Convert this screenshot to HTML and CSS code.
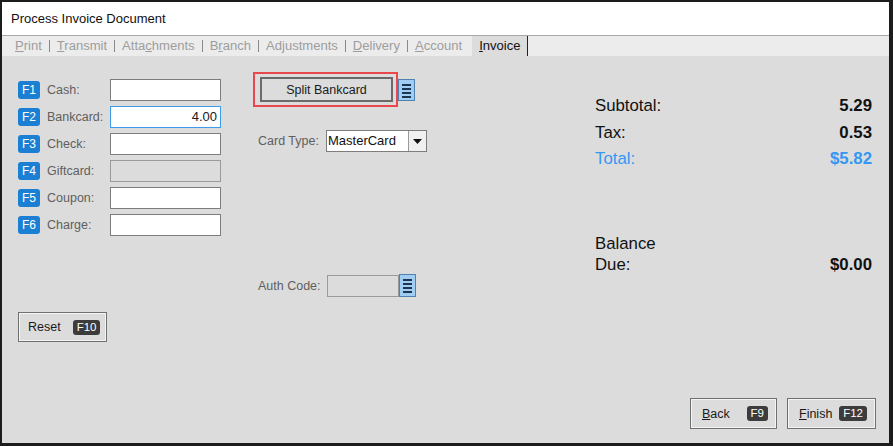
FILE: index.html
```html
<!DOCTYPE html>
<html>
<head>
<meta charset="utf-8">
<title>Process Invoice Document</title>
<link rel="stylesheet" href="styles.css">
</head>
<body>
<div class="window">
  <div class="titlebar">Process Invoice Document</div>
  <div class="tabs">
    <span class="tab"><u>P</u>rint</span><span class="sep"></span>
    <span class="tab"><u>T</u>ransmit</span><span class="sep"></span>
    <span class="tab">Atta<u>c</u>hments</span><span class="sep"></span>
    <span class="tab">B<u>r</u>anch</span><span class="sep"></span>
    <span class="tab">Ad<u>j</u>ustments</span><span class="sep"></span>
    <span class="tab"><u>D</u>elivery</span><span class="sep"></span>
    <span class="tab"><u>A</u>ccount</span>
    <span class="tab active"><u>I</u>nvoice</span>
  </div>
  <div class="main">
    <div class="columns">
      <div class="col-left">
        <div class="pay-list">
          <div class="pay-row"><span class="fkey">F1</span><span class="lbl">Cash:</span><span class="inp"></span></div>
          <div class="pay-row"><span class="fkey">F2</span><span class="lbl">Bankcard:</span><span class="inp focus">4.00</span></div>
          <div class="pay-row"><span class="fkey">F3</span><span class="lbl">Check:</span><span class="inp"></span></div>
          <div class="pay-row"><span class="fkey">F4</span><span class="lbl">Giftcard:</span><span class="inp disabled"></span></div>
          <div class="pay-row"><span class="fkey">F5</span><span class="lbl">Coupon:</span><span class="inp"></span></div>
          <div class="pay-row"><span class="fkey">F6</span><span class="lbl">Charge:</span><span class="inp"></span></div>
        </div>
        <div class="btn reset">Reset <span class="dkey">F10</span></div>
      </div>
      <div class="col-mid">
        <div class="split-row">
          <div class="highlight"><div class="btn split">Split Bankcard</div></div>
          <span class="menu-ico"><svg width="15" height="20" viewBox="0 0 15 20"><rect x="3" y="4" width="9" height="2" fill="#1d3550"/><rect x="3" y="8" width="9" height="2" fill="#1d3550"/><rect x="3" y="12" width="9" height="2" fill="#1d3550"/><rect x="3" y="16" width="9" height="2" fill="#1d3550"/></svg></span>
        </div>
        <div class="card-row">
          <span class="lbl">Card Type:</span>
          <div class="select"><span class="sel-val">MasterCard</span><span class="sel-arrow"><svg width="9" height="5" viewBox="0 0 9 5"><path d="M0 0H9L4.5 5Z" fill="#111"/></svg></span></div>
        </div>
        <div class="auth-row">
          <span class="lbl">Auth Code:</span>
          <span class="inp auth disabled"></span>
          <span class="menu-ico auth-ico"><svg width="15" height="21" viewBox="0 0 15 21"><rect x="3" y="4" width="9" height="2" fill="#1d3550"/><rect x="3" y="8" width="9" height="2" fill="#1d3550"/><rect x="3" y="12" width="9" height="2" fill="#1d3550"/><rect x="3" y="16" width="9" height="2" fill="#1d3550"/></svg></span>
        </div>
      </div>
      <div class="col-right">
        <div class="sum-row"><span>Subtotal:</span><b>5.29</b></div>
        <div class="sum-row"><span>Tax:</span><b>0.53</b></div>
        <div class="sum-row total"><span>Total:</span><b>$5.82</b></div>
        <div class="balance-row"><span>Balance<br>Due:</span><b>$0.00</b></div>
      </div>
    </div>
    <div class="footer">
      <div class="btn nav"><span><u>B</u>ack</span><span class="dkey">F9</span></div>
      <div class="btn nav finish"><span><u>F</u>inish</span><span class="dkey">F12</span></div>
    </div>
  </div>
</div>
</body>
</html>
```
FILE: styles.css
```css
* { box-sizing: border-box; }
html, body { margin: 0; padding: 0; }
body {
  width: 893px;
  height: 446px;
  overflow: hidden;
  font-family: "Liberation Sans", Arial, sans-serif;
  background: #dcdcdc;
}
.window {
  width: 893px;
  height: 446px;
  border: 2px solid #1c1c1c;
  border-right-width: 4px;
  border-bottom-width: 3px;
  display: flex;
  flex-direction: column;
  background: #dcdcdc;
}
.titlebar {
  height: 34px;
  background: #fff;
  border-bottom: 1px solid #a9a9a9;
  padding: 9px 0 0 9px;
  font-size: 13px;
  color: #111;
}
.tabs {
  height: 20px;
  background: #ececec;
  display: flex;
  align-items: center;
  padding-left: 13px;
  font-size: 13.05px;
  color: #9d9d9d;
}
.tab { line-height: 20px; white-space: nowrap; }
.sep {
  width: 1px;
  height: 12px;
  background: #8a8a8a;
  margin: 0 7px;
}
.tab.active {
  margin-left: 10px;
  background: #dcdcdc;
  color: #111;
  padding: 0 7px;
  height: 20px;
  border-right: 1px solid #222;
}
.main {
  flex: 1;
  display: flex;
  flex-direction: column;
}
.columns {
  display: flex;
}
.col-left {
  width: 251px;
  padding-left: 16px;
}
.pay-list {
  margin-top: 23px;
  display: flex;
  flex-direction: column;
  gap: 5px;
}
.pay-row {
  display: flex;
  align-items: center;
  height: 22px;
}
.fkey {
  width: 22px;
  height: 18px;
  border-radius: 3px;
  background: #1b7fd3;
  color: #fff;
  font-size: 12px;
  line-height: 18px;
  text-align: center;
}
.lbl {
  font-size: 12.5px;
  color: #5f5f5f;
}
.pay-row .lbl {
  width: 70px;
  padding-left: 7px;
}
.inp {
  display: block;
  width: 111px;
  height: 22px;
  background: #fff;
  border: 1px solid #7d7d7d;
  font-size: 13px;
  text-align: right;
  padding-right: 3px;
  line-height: 20px;
  color: #1a1a1a;
}
.inp.focus { border-color: #3d9be9; }
.inp.disabled { background: #dcdcdc; border-color: #9a9a9a; }
.btn {
  border: 1px solid #707070;
  box-shadow: inset 0 0 0 1px #f4f4f4;
  background: #dcdcdc;
  font-size: 12.5px;
  color: #1a1a1a;
  display: flex;
  align-items: center;
}
.reset {
  margin-top: 76px;
  width: 89px;
  height: 30px;
  padding-left: 9px;
  gap: 12px;
}
.dkey {
  background: #3c3c3c;
  color: #fff;
  border-radius: 3px;
  font-size: 11.5px;
  padding: 0 4px;
  height: 15px;
  line-height: 15px;
}
.col-mid {
  width: 342px;
}
.split-row {
  margin-top: 16px;
  display: flex;
  align-items: flex-start;
}
.highlight {
  width: 145px;
  height: 35px;
  border: 2px solid #e8484b;
  padding: 3px 3px 3px 5px;
}
.split {
  width: 133px;
  height: 25px;
  justify-content: center;
  border: 2px solid #6a6a6a;
  box-shadow: none;
}
.menu-ico {
  display: block;
  width: 17px;
  height: 22px;
  margin-top: 7px;
  background: #9fcdf4;
  border: 1px solid #5080ae;
}
.menu-ico svg { display: block; }
.card-row {
  margin-top: 23px;
  display: flex;
  align-items: center;
  padding-left: 5px;
  height: 22px;
}
.card-row .lbl { width: 68px; }
.select {
  width: 101px;
  height: 22px;
  background: #fff;
  border: 1px solid #7d7d7d;
  display: flex;
}
.sel-val {
  flex: 1;
  font-size: 13px;
  color: #111;
  padding-left: 1px;
  line-height: 19px;
}
.sel-arrow {
  width: 18px;
  border-left: 1px solid #9a9a9a;
  background: #f0f0f0;
  display: flex;
  align-items: center;
  justify-content: center;
}
.auth-row {
  margin-top: 122px;
  display: flex;
  align-items: center;
  padding-left: 5px;
}
.auth-row .lbl { width: 69px; }
.inp.auth { width: 72px; }
.auth-ico { margin-top: 0; height: 23px; }
.col-right {
  flex: 1;
  padding-left: 0;
  padding-right: 17px;
  padding-top: 40px;
  font-size: 16.8px;
  color: #111;
}
.sum-row {
  display: flex;
  justify-content: space-between;
  height: 26.5px;
  line-height: 20px;
}
.sum-row b, .balance-row b { font-weight: bold; }
.total { color: #3497f2; }
.balance-row {
  margin-top: 57px;
  display: flex;
  justify-content: space-between;
  align-items: flex-end;
  line-height: 21px;
}
.footer {
  margin-top: auto;
  display: flex;
  justify-content: flex-end;
  gap: 10px;
  padding: 0 13px 14px 0;
}
.nav {
  width: 87px;
  height: 31px;
  padding: 0 8px 0 11px;
  justify-content: space-between;
}
.finish { width: 89px; }
```
